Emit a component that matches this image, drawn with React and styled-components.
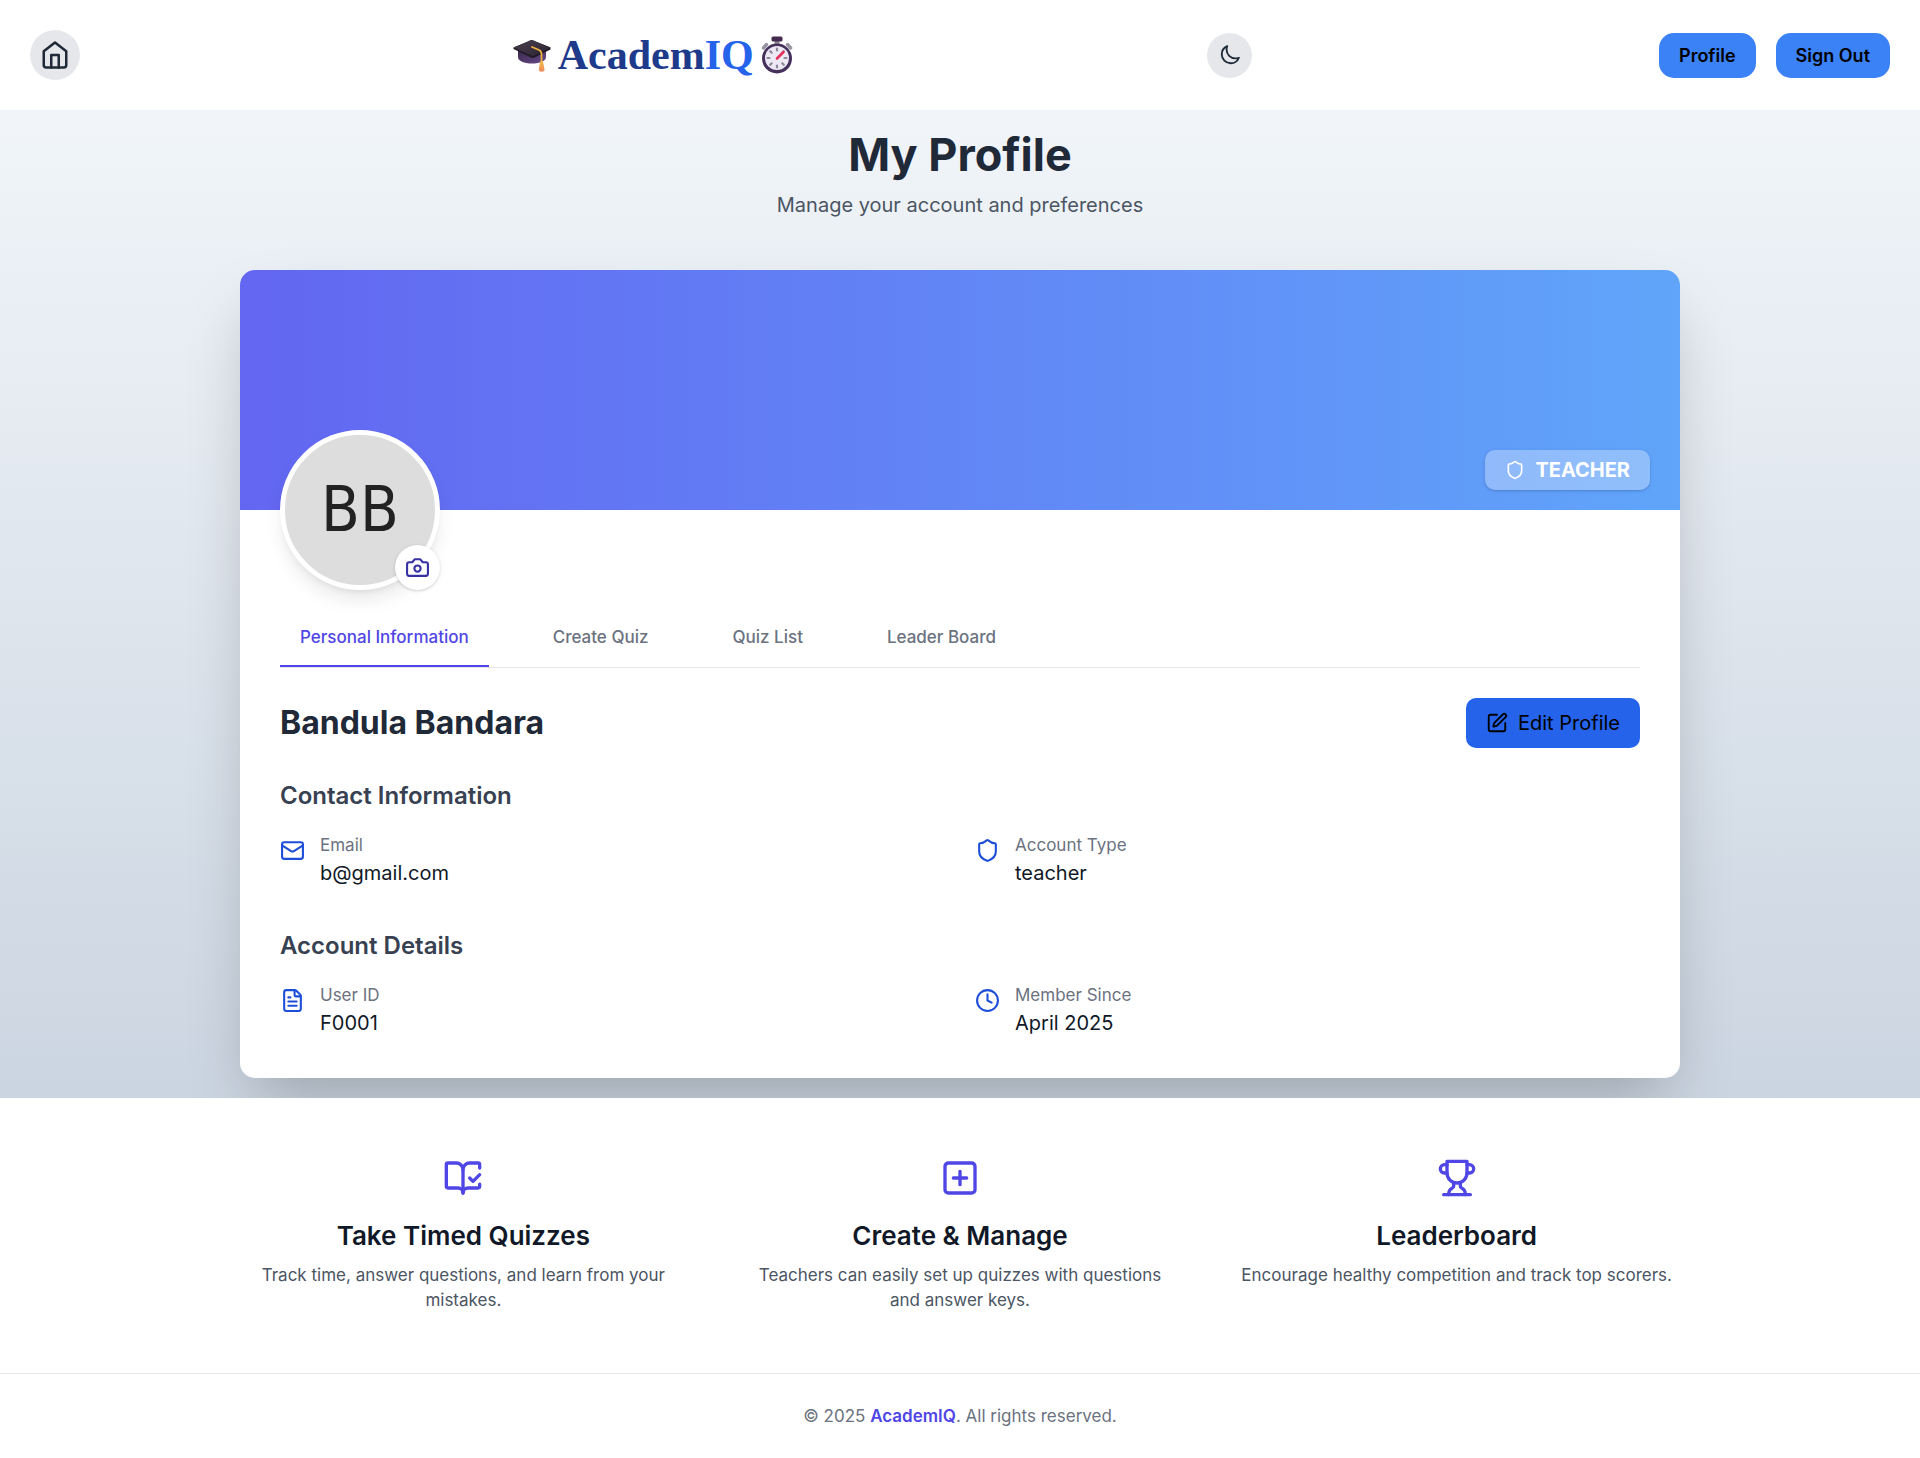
import React from 'react';
import styled, { createGlobalStyle } from 'styled-components';
import { BookOpenCheck, Clock, FileText, Mail, Shield, SquarePen, SquarePlus } from 'lucide-react';

const GlobalStyle = createGlobalStyle`
  *, *::before, *::after { box-sizing: border-box; }
  body {
    margin: 0;
    background: #ffffff;
    color: #111827;
    font-family: Inter, 'Liberation Sans', sans-serif;
    font-size: 20px;
    line-height: 30px;
  }
  h1, h2, h3, p, dl, dd { margin: 0; }
  button { font: inherit; border: 0; cursor: pointer; }
  a { color: inherit; text-decoration: none; }
  svg { display: block; flex: none; }
`;

const Header = styled.header`
  display: flex;
  align-items: center;
  justify-content: space-between;
  padding: 30px;
  background: #ffffff;
`;

const RoundLink = styled.a`
  display: flex;
  padding: 10px;
  border-radius: 50%;
  background: #e5e7eb;
  color: #1f2937;
`;

const RoundButton = styled.button`
  display: flex;
  align-items: center;
  justify-content: center;
  width: 45px;
  height: 45px;
  padding: 0;
  border-radius: 50%;
  background: #e5e7eb;
  color: #1f2937;
`;

const Logo = styled.a`
  display: flex;
  align-items: center;
  gap: 7px;
  height: 50px;
  padding: 0 8px 0 26px;
  color: #1e3a8a;
  font-family: Georgia, 'Liberation Serif', serif;
  font-size: 42px;
  font-weight: 700;
  line-height: 50px;
`;

const LogoAccent = styled.span`
  color: #2563eb;
`;

const HeaderActions = styled.nav`
  display: flex;
  gap: 20px;
`;

const ActionButton = styled.button`
  padding: 10px 20px;
  border-radius: 15px;
  background: #3b82f6;
  color: #000000;
  font-size: 18px;
  font-weight: 600;
  line-height: 25px;
`;

const Main = styled.main`
  padding: 20px;
  overflow: hidden;
  background: linear-gradient(to bottom, #f1f5f9, #cbd5e1);
`;

const PageIntro = styled.div`
  display: grid;
  gap: 10px;
  margin-bottom: 50px;
  text-align: center;
`;

const PageTitle = styled.h1`
  color: #1f2937;
  font-size: 45px;
  font-weight: 700;
  line-height: 50px;
`;

const PageSubtitle = styled.p`
  color: #4b5563;
`;

const Card = styled.section`
  max-width: 1440px;
  margin: 0 auto;
  border-radius: 15px;
  background: #ffffff;
  box-shadow: 0 30px 60px -15px rgba(0, 0, 0, 0.25);
`;

const Banner = styled.div`
  position: relative;
  height: 240px;
  border-radius: 15px 15px 0 0;
  background: linear-gradient(to right, #6366f1, #60a5fa);
`;

const Avatar = styled.div`
  position: absolute;
  left: 40px;
  bottom: -80px;
  display: flex;
  align-items: center;
  justify-content: center;
  width: 160px;
  height: 160px;
  border: 5px solid #ffffff;
  border-radius: 50%;
  background: #dddddd;
  color: #222222;
  font-family: 'DejaVu Sans Condensed', Roboto, sans-serif;
  font-size: 63px;
  box-shadow: 0 12px 20px -4px rgba(0, 0, 0, 0.1), 0 5px 8px -5px rgba(0, 0, 0, 0.1);
`;

const CameraButton = styled.button`
  position: absolute;
  right: -5px;
  bottom: -5px;
  display: flex;
  padding: 10px;
  border-radius: 50%;
  background: #ffffff;
  color: #3730a3;
  box-shadow: 0 1px 4px rgba(0, 0, 0, 0.1), 0 1px 2px rgba(0, 0, 0, 0.1);
`;

const RoleBadge = styled.span`
  position: absolute;
  right: 30px;
  bottom: 20px;
  display: flex;
  align-items: center;
  gap: 10px;
  padding: 5px 20px;
  border-radius: 10px;
  background: rgba(255, 255, 255, 0.3);
  color: #ffffff;
  font-weight: 700;
  box-shadow: 0 1px 4px rgba(0, 0, 0, 0.1), 0 1px 2px rgba(0, 0, 0, 0.1);
`;

const CardBody = styled.div`
  padding: 100px 40px 40px;
`;

const Tabs = styled.div`
  display: flex;
  gap: 44px;
  margin-bottom: 30px;
  border-bottom: 1px solid #e5e7eb;
`;

const Tab = styled.button`
  padding: 15px 20px;
  border-bottom: 2px solid ${({ $active }) => ($active ? '#4f46e5' : 'transparent')};
  background: transparent;
  color: ${({ $active }) => ($active ? '#4f46e5' : '#6b7280')};
  font-size: 17px;
  font-weight: 500;
  line-height: 25px;
`;

const NameRow = styled.div`
  display: flex;
  align-items: center;
  justify-content: space-between;
  margin-bottom: 30px;
`;

const Name = styled.h2`
  color: #1f2937;
  font-size: 32px;
  font-weight: 700;
  line-height: 40px;
`;

const EditButton = styled.button`
  display: flex;
  align-items: center;
  gap: 10px;
  padding: 10px 20px;
  border-radius: 10px;
  background: #2563eb;
  color: #000000;
`;

const Details = styled.section`
  display: grid;
  gap: 20px;

  & + & { margin-top: 40px; }
`;

const DetailsTitle = styled.h3`
  color: #374151;
  font-size: 24px;
  font-weight: 600;
  line-height: 35px;
`;

const DetailsGrid = styled.div`
  display: grid;
  grid-template-columns: repeat(2, 1fr);
  gap: 30px;
`;

const Detail = styled.div`
  display: flex;
  gap: 15px;
  color: #1d4ed8;

  svg { margin-top: 5px; }
`;

const DetailLabel = styled.dt`
  color: #6b7280;
  font-size: 17px;
  line-height: 25px;
`;

const DetailValue = styled.dd`
  color: #111827;
`;

const Features = styled.section`
  display: grid;
  grid-template-columns: repeat(3, 1fr);
  gap: 50px;
  max-width: 1440px;
  margin: 0 auto;
  padding: 60px 0;
`;

const Feature = styled.article`
  display: flex;
  flex-direction: column;
  align-items: center;
  padding: 0 6px;
  color: #4f46e5;
  text-align: center;
`;

const FeatureTitle = styled.h3`
  margin: 20px 0 10px;
  color: #111827;
  font-size: 26px;
  font-weight: 600;
  line-height: 35px;
`;

const FeatureText = styled.p`
  color: #4b5563;
  font-size: 17px;
  line-height: 25px;
`;

const Footer = styled.footer`
  padding: 30px;
  border-top: 1px solid #e5e7eb;
  color: #6b7280;
  font-size: 17px;
  line-height: 25px;
  text-align: center;
`;

const FooterBrand = styled.a`
  color: #4f46e5;
  font-weight: 600;
`;

const strokeProps = {
  viewBox: '0 0 24 24',
  fill: 'none',
  stroke: 'currentColor',
  strokeLinecap: 'round',
  strokeLinejoin: 'round',
  'aria-hidden': true,
};

const HomeIcon = () => (
  <svg {...strokeProps} width="30" height="30" strokeWidth="2">
    <path d="m3 9 9-7 9 7v11a2 2 0 0 1-2 2H5a2 2 0 0 1-2-2z" />
    <path d="M9 22V12h6v10" />
  </svg>
);

const MoonIcon = () => (
  <svg {...strokeProps} width="22" height="22" strokeWidth="2">
    <path d="M21.752 15.002A9.72 9.72 0 0 1 18 15.75c-5.385 0-9.75-4.365-9.75-9.75 0-1.33.266-2.597.748-3.752A9.753 9.753 0 0 0 3 11.25C3 16.635 7.365 21 12.75 21a9.753 9.753 0 0 0 9.002-5.998Z" />
  </svg>
);

const CameraIcon = () => (
  <svg {...strokeProps} width="25" height="25" strokeWidth="2">
    <path d="M14.5 4h-5L7 7H4a2 2 0 0 0-2 2v9a2 2 0 0 0 2 2h16a2 2 0 0 0 2-2V9a2 2 0 0 0-2-2h-3l-2.5-3z" />
    <circle cx="12" cy="13" r="3" />
  </svg>
);

const TrophyIcon = () => (
  <svg {...strokeProps} width="40" height="40" strokeWidth="2">
    <path d="M6 9H4.5a2.5 2.5 0 0 1 0-5H6" />
    <path d="M18 9h1.5a2.5 2.5 0 0 0 0-5H18" />
    <path d="M4 22h16" />
    <path d="M10 14.66V17c0 .55-.47.98-.97 1.21C7.85 18.75 7 20.24 7 22" />
    <path d="M14 14.66V17c0 .55.47.98.97 1.21C16.15 18.75 17 20.24 17 22" />
    <path d="M18 2H6v7a6 6 0 0 0 12 0V2Z" />
  </svg>
);

const CapIcon = () => (
  <svg width="38" height="36" viewBox="0 -2 38 36" aria-hidden="true">
    <defs>
      <linearGradient id="capBoard" x1="0" y1="0" x2="1" y2="1">
        <stop offset="0" stopColor="#4a3f4f" />
        <stop offset="1" stopColor="#2b2230" />
      </linearGradient>
      <linearGradient id="capBase" x1="0" y1="0" x2="1" y2="1">
        <stop offset="0" stopColor="#3a2a4c" />
        <stop offset="1" stopColor="#6a4a8c" />
      </linearGradient>
      <linearGradient id="capTassel" x1="0" y1="0" x2="0" y2="1">
        <stop offset="0" stopColor="#f2b84b" />
        <stop offset="1" stopColor="#f08a5a" />
      </linearGradient>
    </defs>
    <path d="M5 12v6c0 4 6 6.5 14 6.5S33 22 33 18v-6z" fill="url(#capBase)" />
    <path d="M.5 8.5 18 1.2a2 2 0 0 1 1.5 0L37.5 8.5v2L21 18.8a3 3 0 0 1-2.5 0L.5 10z" fill="#211a27" />
    <path d="M.5 8.5 18 1.2a2 2 0 0 1 1.5 0L37.5 8.5 21 16.8a3 3 0 0 1-2.5 0z" fill="url(#capBoard)" />
    <path d="m19 8 7 3c2 1 2.5 2 2.5 4v8" fill="none" stroke="#eeb03f" strokeWidth="1.8" strokeLinecap="round" />
    <path d="M27 22.5h3l1.5 8c.3 3-6 3-5.7 0z" fill="url(#capTassel)" />
  </svg>
);

const StopwatchIcon = () => {
  const ticks = [0, 45, 90, 135, 180, 225, 270, 315];
  return (
    <svg width="32" height="38" viewBox="0 0 32 38" aria-hidden="true">
      <path d="m2.5 12 3-3.5M29.5 12l-3-3.5" stroke="#9a95a3" strokeWidth="3.5" strokeLinecap="round" />
      <path d="M13.5 4h5v6h-5z" fill="#8f8a99" />
      <rect x="10.5" y="0.5" width="11" height="5" rx="1.5" fill="#452a50" />
      <circle cx="16" cy="22.5" r="15" fill="#46305c" />
      <circle cx="16" cy="22" r="12" fill="#ece8f4" />
      {ticks.map((angle) => (
        <path
          key={angle}
          d="M16 12.5v2"
          stroke="#8d8797"
          strokeWidth="2.2"
          strokeLinecap="round"
          transform={`rotate(${angle} 16 22)`}
        />
      ))}
      <path d="m16 22.5 6.5-6.5" stroke="#e8315e" strokeWidth="2.6" strokeLinecap="round" />
    </svg>
  );
};

const tabs = ['Personal Information', 'Create Quiz', 'Quiz List', 'Leader Board'];

const sections = [
  {
    title: 'Contact Information',
    items: [
      { icon: Mail, label: 'Email', value: 'b@gmail.com' },
      { icon: Shield, label: 'Account Type', value: 'teacher' },
    ],
  },
  {
    title: 'Account Details',
    items: [
      { icon: FileText, label: 'User ID', value: 'F0001' },
      { icon: Clock, label: 'Member Since', value: 'April 2025' },
    ],
  },
];

const features = [
  {
    icon: <BookOpenCheck size={40} />,
    title: 'Take Timed Quizzes',
    text: 'Track time, answer questions, and learn from your mistakes.',
  },
  {
    icon: <SquarePlus size={40} />,
    title: 'Create & Manage',
    text: 'Teachers can easily set up quizzes with questions and answer keys.',
  },
  {
    icon: <TrophyIcon />,
    title: 'Leaderboard',
    text: 'Encourage healthy competition and track top scorers.',
  },
];

export default function App() {
  return (
    <>
      <GlobalStyle />
      <Header>
        <RoundLink href="#home" aria-label="Home">
          <HomeIcon />
        </RoundLink>
        <Logo href="#home">
          <CapIcon />
          <span>
            Academ<LogoAccent>IQ</LogoAccent>
          </span>
          <StopwatchIcon />
        </Logo>
        <RoundButton type="button" aria-label="Toggle dark mode">
          <MoonIcon />
        </RoundButton>
        <HeaderActions>
          <ActionButton type="button">Profile</ActionButton>
          <ActionButton type="button">Sign Out</ActionButton>
        </HeaderActions>
      </Header>

      <Main>
        <PageIntro>
          <PageTitle>My Profile</PageTitle>
          <PageSubtitle>Manage your account and preferences</PageSubtitle>
        </PageIntro>

        <Card>
          <Banner>
            <RoleBadge>
              <Shield size={20} />
              TEACHER
            </RoleBadge>
            <Avatar>
              BB
              <CameraButton type="button" aria-label="Change photo">
                <CameraIcon />
              </CameraButton>
            </Avatar>
          </Banner>

          <CardBody>
            <Tabs role="tablist">
              {tabs.map((tab, index) => (
                <Tab key={tab} type="button" role="tab" aria-selected={index === 0} $active={index === 0}>
                  {tab}
                </Tab>
              ))}
            </Tabs>

            <NameRow>
              <Name>Bandula Bandara</Name>
              <EditButton type="button">
                <SquarePen size={22} />
                Edit Profile
              </EditButton>
            </NameRow>

            {sections.map((section) => (
              <Details key={section.title}>
                <DetailsTitle>{section.title}</DetailsTitle>
                <DetailsGrid>
                  {section.items.map(({ icon: Icon, label, value }) => (
                    <Detail key={label}>
                      <Icon size={25} />
                      <dl>
                        <DetailLabel>{label}</DetailLabel>
                        <DetailValue>{value}</DetailValue>
                      </dl>
                    </Detail>
                  ))}
                </DetailsGrid>
              </Details>
            ))}
          </CardBody>
        </Card>
      </Main>

      <Features>
        {features.map((feature) => (
          <Feature key={feature.title}>
            {feature.icon}
            <FeatureTitle>{feature.title}</FeatureTitle>
            <FeatureText>{feature.text}</FeatureText>
          </Feature>
        ))}
      </Features>

      <Footer>
        © 2025 <FooterBrand href="#home">AcademIQ</FooterBrand>. All rights reserved.
      </Footer>
    </>
  );
}
